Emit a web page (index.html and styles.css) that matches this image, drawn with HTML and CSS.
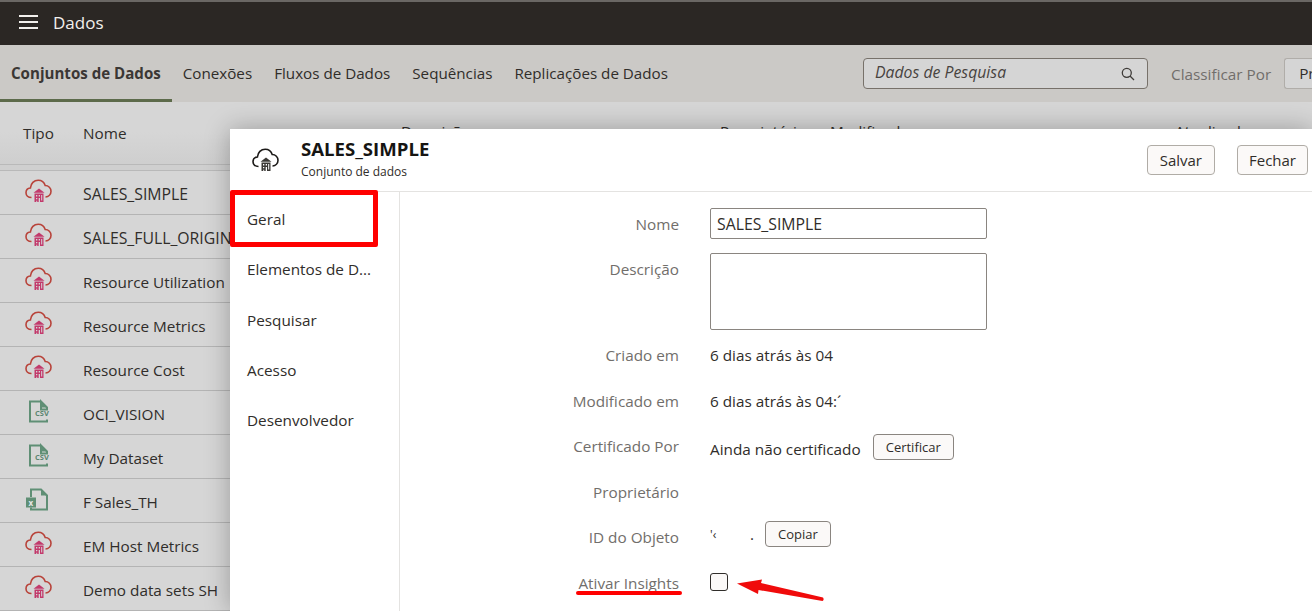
FILE: index.html
```html
<!DOCTYPE html>
<html lang="pt">
<head>
  <meta charset="UTF-8" />
  <title>Dados</title>
  <link rel="stylesheet" href="styles.css">
</head>
<body>
  <svg class="defs" width="0" height="0">
    <symbol id="cloud" viewBox="0 0 27 24">
      <path d="M6.500 18.500C3 18.500 1 16.500 1 13.800 1 11 3 9.200 5.400 9 5.800 4.500 9 1.200 13.200 1.200c3.500 0 6 2 7 5.300 3.400 0 5.800 2.600 5.800 5.700 0 3.300-2.400 5.600-5.500 5.800" fill="none" stroke="currentColor" stroke-width="1.600"/>
      <path class="house" d="M14 9.500l5.500 4.200h-11z"/>
      <path class="house" d="M9.500 14.500h9v8.500h-9zM11 16v1.500h1.300V16zm2.700 0v1.500H15V16zm-2.700 3v1.300h1.300V19zm2.700 0v4H15v-4zm-2.700 2.700v1h1.300v-1zM16.200 16v5.500h1V16z" fill-rule="evenodd"/>
    </symbol>
  </svg>

  <header class="topbar">
    <svg class="menu-icon" width="19" height="14" viewBox="0 0 19 14"><path d="M0 1h19M0 7h19M0 13h19" stroke="#f2f0ed" stroke-width="2"/></svg>
    <span class="topbar-title">Dados</span>
  </header>

  <nav class="tabs">
    <div class="tab-group">
      <a class="tab active">Conjuntos de Dados</a>
      <a class="tab">Conexões</a>
      <a class="tab">Fluxos de Dados</a>
      <a class="tab">Sequências</a>
      <a class="tab">Replicações de Dados</a>
    </div>
    <div class="search">
      <span>Dados de Pesquisa</span>
      <svg width="14" height="14" viewBox="0 0 14 14"><circle cx="5.800" cy="5.800" r="4.500" fill="none" stroke="#3f3c39" stroke-width="1.300"/><path d="M9 9l4 4" stroke="#3f3c39" stroke-width="1.300"/></svg>
    </div>
    <span class="sort-label">Classificar Por</span>
    <div class="sort-select">Pr</div>
  </nav>

  <main class="list">
    <div class="list-head">
      <span class="col-type">Tipo</span>
      <span class="col-name">Nome</span>
      <span class="col-desc peek">Descrição</span>
      <span class="col-owner peek">Proprietário</span>
      <span class="col-mod peek">Modificado</span>
      <span class="col-upd peek">Atualizado</span>
    </div>
    <div class="row"><svg class="row-icon cloud-red"><use href="#cloud"/></svg><span class="caps">SALES_SIMPLE</span></div>
    <div class="row"><svg class="row-icon cloud-red"><use href="#cloud"/></svg><span class="caps">SALES_FULL_ORIGINAL</span></div>
    <div class="row"><svg class="row-icon cloud-red"><use href="#cloud"/></svg><span>Resource Utilization</span></div>
    <div class="row"><svg class="row-icon cloud-red"><use href="#cloud"/></svg><span>Resource Metrics</span></div>
    <div class="row"><svg class="row-icon cloud-red"><use href="#cloud"/></svg><span>Resource Cost</span></div>
    <div class="row">
      <svg class="row-icon file-green" viewBox="0 0 27 24"><path d="M16 2.500H5v20h17v-2M16 2.500l6 6v2h-6z" fill="none" stroke="currentColor" stroke-width="2"/><path d="M16 2.500l6 6h-6z" fill="currentColor"/><text x="10" y="17" class="csv-text">CSV</text></svg>
      <span>OCI_VISION</span>
    </div>
    <div class="row">
      <svg class="row-icon file-green" viewBox="0 0 27 24"><path d="M16 2.500H5v20h17v-2M16 2.500l6 6v2h-6z" fill="none" stroke="currentColor" stroke-width="2"/><path d="M16 2.500l6 6h-6z" fill="currentColor"/><text x="10" y="17" class="csv-text">CSV</text></svg>
      <span>My Dataset</span>
    </div>
    <div class="row">
      <svg class="row-icon file-green" viewBox="0 0 27 24"><path d="M6 10V2.500h10l6 6v14H6v-2" fill="none" stroke="currentColor" stroke-width="2"/><path d="M16 2.500l6 6h-6z" fill="currentColor"/><rect x="1" y="10.500" width="10" height="10" fill="currentColor"/><text x="3.500" y="18.500" class="xls-text">x</text></svg>
      <span>F Sales_TH</span>
    </div>
    <div class="row"><svg class="row-icon cloud-red"><use href="#cloud"/></svg><span>EM Host Metrics</span></div>
    <div class="row"><svg class="row-icon cloud-red"><use href="#cloud"/></svg><span>Demo data sets SH</span></div>
  </main>

  <section class="dialog">
    <div class="dialog-head">
      <svg class="dialog-icon"><use href="#cloud"/></svg>
      <div class="dialog-title">
        <h1>SALES_SIMPLE</h1>
        <p>Conjunto de dados</p>
      </div>
      <button class="btn save">Salvar</button>
      <button class="btn">Fechar</button>
    </div>
    <div class="dialog-body">
      <ul class="side">
        <li>Geral</li>
        <li>Elementos de D...</li>
        <li>Pesquisar</li>
        <li>Acesso</li>
        <li>Desenvolvedor</li>
      </ul>
      <div class="form">
        <label class="top-label">Nome</label>
        <div class="top-value"><input class="text-input" value="SALES_SIMPLE"></div>
        <label class="top-label">Descrição</label>
        <div class="top-value"><textarea class="text-area"></textarea></div>
        <label>Criado em</label>
        <div>6 dias atrás às 04</div>
        <label>Modificado em</label>
        <div>6 dias atrás às 04:´</div>
        <label>Certificado Por</label>
        <div class="cert-value">Ainda não certificado<button class="btn small cert">Certificar</button></div>
        <label>Proprietário</label>
        <div></div>
        <label>ID do Objeto</label>
        <div class="id-value"><span class="obj-id">'‹</span><span class="obj-dot">.</span><button class="btn small">Copiar</button></div>
        <label>Ativar Insights</label>
        <div><span class="check"></span></div>
      </div>
    </div>
  </section>

  <div class="mark-box"></div>
  <div class="mark-line"></div>
  <svg class="mark-arrow" width="90" height="30" viewBox="0 0 90 30">
    <path d="M1 7.500 L26 3.500 L25 7 L87 21.500 Q88.500 24 86.500 25 L22.500 14 L22 18z" fill="#f00b0b"/>
  </svg>
</body>
</html>
```

FILE: styles.css
```css
* {
  box-sizing: border-box;
}
html, body {
  height: 100%;
}
body {
  margin: 0;
  overflow: hidden;
  position: relative;
  background: #d6d6d6;
  font-family: 'Open Sans', sans-serif;
  font-size: 15.300px;
  color: #302d2a;
}
.defs {
  position: absolute;
}

.topbar {
  height: 45px;
  background: #2b2724;
  border-top: 2px solid #6a6764;
  display: flex;
  align-items: center;
  padding-left: 19px;
  color: #f2f0ed;
}
.topbar-title {
  margin-left: 15px;
  margin-bottom: 2px;
  font-size: 17px;
}
.menu-icon {
  margin-bottom: 3px;
}

.tabs {
  height: 57px;
  background: #cbc9c6;
  display: flex;
  align-items: center;
}
.tab-group {
  width: 863px;
  height: 100%;
  flex-shrink: 0;
  display: flex;
  font-size: 15.200px;
}
.tab {
  height: 100%;
  padding: 0 11px 2px;
  display: flex;
  align-items: center;
  white-space: nowrap;
}
.tab.active {
  font-size: 15.100px;
  font-weight: 700;
  color: #3b3734;
  border-bottom: 3px solid #5d6b4b;
  padding-top: 2px;
  padding-bottom: 1px;
}
.search {
  width: 285px;
  height: 31px;
  flex-shrink: 0;
  padding: 0 12px 0 11px;
  display: flex;
  align-items: center;
  justify-content: space-between;
  background: #d5d5d5;
  border: 1px solid #77716a;
  border-radius: 4px;
  font-size: 15.800px;
  font-style: italic;
  color: #48433f;
}
.search span {
  margin-bottom: 3px;
}
.sort-label {
  margin-left: 23px;
  color: #716e6b;
  white-space: nowrap;
  flex-shrink: 0;
}
.sort-select {
  margin-left: 13px;
  height: 31px;
  flex: 1;
  padding: 4px 14px;
  background: #d5d5d5;
  border: 1px solid #b0ada9;
  border-right: none;
  border-radius: 3px 0 0 3px;
  white-space: nowrap;
}

.list {
  background: linear-gradient(#d6d6d6 30px, #cfcfcf 60px);
}
.list-head {
  height: 63px;
  position: relative;
  border-bottom: 1px solid #b9b9b9;
}
.list-head span {
  position: absolute;
  top: 21px;
}
.list-head .peek {
  top: 19px;
}
.col-type { left: 23px; }
.col-name { left: 83px; }
.col-desc { left: 401px; }
.col-owner { left: 720px; }
.col-mod { left: 830px; }
.col-upd { left: 1175px; }

.row {
  height: 44px;
  display: flex;
  align-items: center;
  background: #d6d6d6;
  border-bottom: 1px solid #b4b4b4;
  white-space: nowrap;
}
.row span {
  margin-top: 2px;
}
.row .caps {
  font-size: 15.800px;
}
.list-head + .row {
  height: 50px;
  padding-top: 6px;
  background: linear-gradient(#cfcfcf 5px, #b9b9b9 5px, #b9b9b9 6px, #d6d6d6 6px);
}
.row-icon {
  width: 27px;
  height: 24px;
  margin-left: 25px;
  margin-right: 31px;
  margin-top: -3px;
  flex-shrink: 0;
}
.house {
  fill: var(--house);
}
.cloud-red {
  color: #b8433a;
  --house: #c2396b;
}
.file-green {
  color: #5f8f75;
}
.csv-text {
  font: 700 7.500px 'Open Sans', sans-serif;
  fill: #5a8570;
}
.xls-text {
  font: 700 8px 'Open Sans', sans-serif;
  fill: #e6e6e6;
}

.dialog {
  position: absolute;
  left: 230px;
  top: 129px;
  right: 0;
  bottom: 0;
  background: #fff;
  box-shadow: 0 0 24px rgba(0, 0, 0, 0.28);
  display: flex;
  flex-direction: column;
}
.dialog-head {
  height: 63px;
  flex-shrink: 0;
  display: flex;
  align-items: center;
  padding: 0 4px 0 22px;
  border-bottom: 1px solid #e4e3e1;
}
.dialog-icon {
  width: 27px;
  height: 24px;
  color: #1c1a18;
  --house: #3a3835;
  margin-right: 22px;
}
.dialog-title {
  flex: 1;
}
.dialog-title h1 {
  margin: 0;
  font-size: 18.600px;
  line-height: 22px;
  font-weight: 700;
  color: #161513;
}
.dialog-title p {
  margin: 2px 0 0;
  font-size: 12px;
  line-height: 20px;
  color: #302d2a;
}
.btn {
  height: 30px;
  padding: 0 11px;
  background: #fbf9f8;
  border: 1px solid #b0aca6;
  border-radius: 4px;
  font-family: inherit;
  font-size: 15px;
  color: #302d2a;
}
.btn.save {
  margin-right: 22px;
  padding: 0 12px;
}
.btn.small {
  height: 26px;
  font-size: 13px;
  padding: 0 12px;
  flex-shrink: 0;
  border-color: #8a8580;
}

.dialog-body {
  flex: 1;
  display: flex;
  min-height: 0;
}
.side {
  width: 170px;
  margin: 0;
  padding: 1.700px 0 0 17px;
  list-style: none;
  border-right: 1px solid #e4e3e1;
  flex-shrink: 0;
}
.side li {
  height: 50.400px;
  display: flex;
  align-items: center;
  white-space: nowrap;
}
.form {
  flex: 1;
  padding-top: 16px;
  display: grid;
  grid-template-columns: 279px 1fr;
  grid-template-rows: 45px 79.500px repeat(6, 45.500px);
  column-gap: 31px;
  align-items: center;
  overflow: hidden;
}
.form label {
  text-align: right;
  color: #716e6b;
  white-space: nowrap;
}
.form .top-label {
  align-self: start;
  padding-top: 6px;
}
.form .top-value {
  align-self: start;
}
.text-input {
  display: block;
  width: 277px;
  height: 31px;
  padding: 0 6px;
  border: 1px solid #8a8580;
  border-radius: 2px;
  font-family: inherit;
  font-size: 15.800px;
  color: #302d2a;
}
.text-area {
  display: block;
  width: 277px;
  height: 77px;
  border: 1px solid #8a8580;
  border-radius: 2px;
  resize: none;
}
.cert-value {
  display: flex;
  align-items: center;
  padding-top: 5px;
}
.cert {
  margin-left: 12px;
  margin-top: -3px;
}
.id-value {
  display: flex;
  align-items: center;
  margin-top: -6px;
}
.obj-id {
  width: 40px;
  font-size: 12px;
}
.obj-dot {
  width: 15px;
}
.check {
  display: block;
  width: 18px;
  height: 18px;
  margin-top: -2px;
  background: #fbf9f8;
  border: 1px solid #302d2a;
  border-radius: 3px;
}

.mark-box {
  position: absolute;
  left: 230px;
  top: 190px;
  width: 148px;
  height: 57px;
  border: 5px solid #f00;
  border-radius: 2px;
}
.mark-line {
  position: absolute;
  left: 576px;
  top: 591px;
  width: 106px;
  height: 4px;
  background: #f00;
  border-radius: 2px;
}
.mark-arrow {
  position: absolute;
  left: 736px;
  top: 576px;
}
```
